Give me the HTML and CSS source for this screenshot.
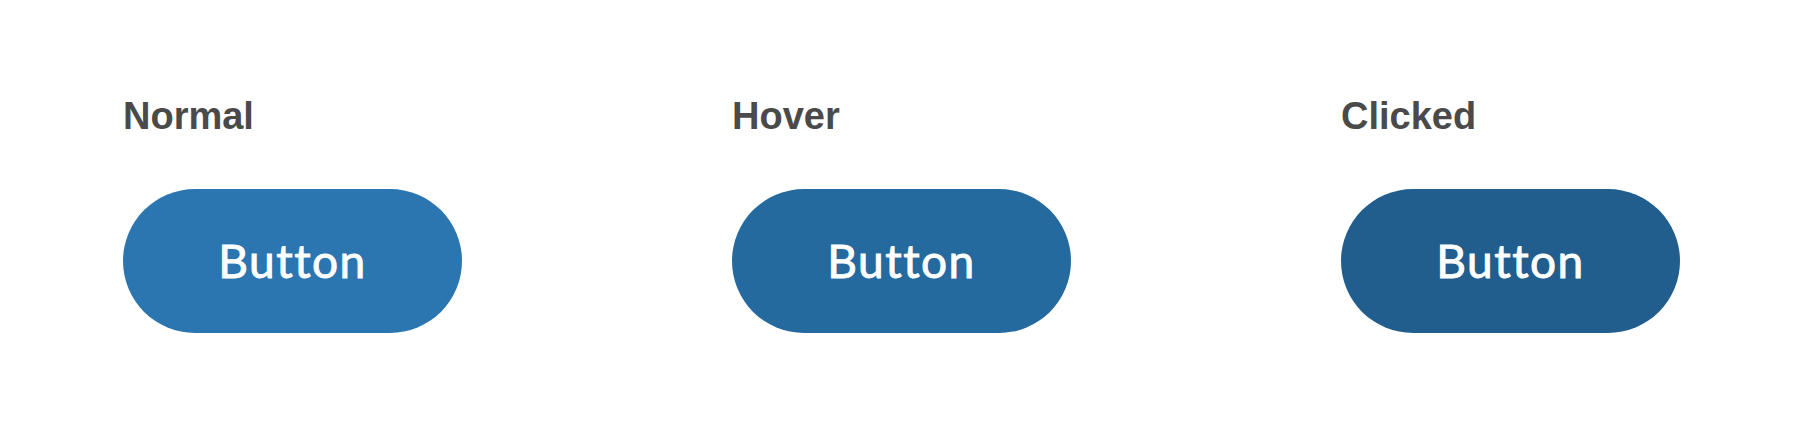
FILE: index.html
```html
<!DOCTYPE html>
<html lang="en">
<head>
<meta charset="utf-8">
<title>Button states</title>
<link rel="stylesheet" href="styles.css">
</head>
<body>
<main class="states">
  <section class="state">
    <h2 class="state-label">Normal</h2>
    <button class="btn btn-normal" type="button">Button</button>
  </section>
  <section class="state">
    <h2 class="state-label">Hover</h2>
    <button class="btn btn-hover" type="button">Button</button>
  </section>
  <section class="state">
    <h2 class="state-label">Clicked</h2>
    <button class="btn btn-clicked" type="button">Button</button>
  </section>
</main>
</body>
</html>
```

FILE: styles.css
```css
html, body {
  margin: 0;
  padding: 0;
  background: #ffffff;
}

.states {
  display: flex;
  gap: 270px;
  padding: 94px 0 0 123px;
}

.state {
  display: flex;
  flex-direction: column;
  gap: 51px;
  width: 339px;
}

.state-label {
  margin: 0;
  font-family: "Liberation Sans", Arial, sans-serif;
  font-weight: 700;
  font-size: 38px;
  line-height: 44px;
  color: #4a4a4a;
}

.btn {
  display: flex;
  align-items: center;
  justify-content: center;
  width: 339px;
  height: 144px;
  padding: 0;
  border: none;
  border-radius: 72px;
  font-family: Lato, "Noto Sans", sans-serif;
  font-weight: 400;
  font-size: 46px;
  line-height: 1.2;
  letter-spacing: 1.5px;
  -webkit-text-stroke: 0.9px #ffffff;
  color: #ffffff;
}

.btn-normal { background: #2b76b1; }
.btn-hover { background: #256a9f; }
.btn-clicked { background: #215e8e; }
```
